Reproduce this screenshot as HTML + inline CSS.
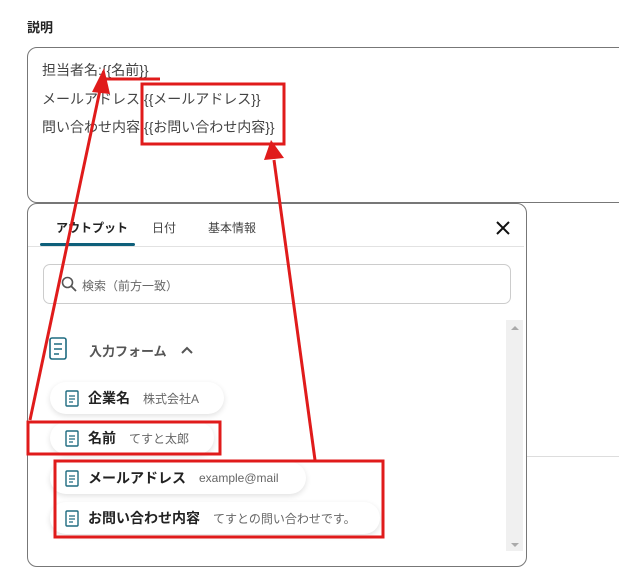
<!DOCTYPE html><html><head><meta charset="utf-8"><style>
body{margin:0;width:619px;height:569px;background:#fff;font-family:"Liberation Sans","Noto Sans CJK JP",sans-serif;position:relative;overflow:hidden}
.a{position:absolute}
.pill{position:absolute;height:32px;border-radius:16px;background:#fff;box-shadow:0 2px 6px rgba(0,0,0,.12);display:flex;align-items:center;white-space:nowrap}
.pill b{font-size:14px;color:#222;margin-left:9px}
.pill span{font-size:12px;color:#666;margin-left:13px}
.t{font-size:14px;color:#444;position:absolute;left:42px}
</style></head><body>
<div class="a" style="left:27px;top:17px;font-size:13px;font-weight:bold;color:#222">説明</div>
<div class="a" style="left:27px;top:47px;width:620px;height:154px;border:1px solid #777;border-radius:10px"></div>
<div class="t" style="top:60px">担当者名:{{名前}}</div>
<div class="t" style="top:89px">メールアドレス {{メールアドレス}}</div>
<div class="t" style="top:117px">問い合わせ内容 {{お問い合わせ内容}}</div>
<div class="a" style="left:526px;top:456px;width:93px;height:1px;background:#ddd"></div>
<div class="a" style="left:27px;top:203px;width:498px;height:362px;border:1px solid #777;border-radius:10px;background:#fff"></div>
<div class="a" style="left:56px;top:219px;font-size:12px;font-weight:bold;color:#222">アウトプット</div>
<div class="a" style="left:152px;top:219px;font-size:12px;color:#444">日付</div>
<div class="a" style="left:208px;top:219px;font-size:12px;color:#444">基本情報</div>
<div class="a" style="left:40px;top:243px;width:95px;height:3px;background:#0e5f7a;border-radius:2px"></div>
<div class="a" style="left:28px;top:246px;width:496px;height:1px;background:#e2e2e2"></div>
<svg class="a" style="left:494px;top:219px" width="18" height="18"><path d="M3 3L15 15M15 3L3 15" stroke="#111" stroke-width="2"/></svg>
<div class="a" style="left:43px;top:264px;width:466px;height:38px;border:1px solid #ccc;border-radius:7px"></div>
<svg class="a" style="left:61px;top:276px" width="16" height="16"><circle cx="6.5" cy="6.5" r="5" fill="none" stroke="#555" stroke-width="1.6"/><path d="M10 10L15 15" stroke="#555" stroke-width="1.8"/></svg>
<div class="a" style="left:82px;top:277px;font-size:12px;color:#666">検索（前方一致）</div>
<div class="a" style="left:506px;top:320px;width:17px;height:231px;background:#f0f0f0"></div>
<div class="a" style="left:511px;top:326px;border:4px solid transparent;border-bottom:4px solid #aaa;border-top:0"></div>
<div class="a" style="left:511px;top:543px;border:4px solid transparent;border-top:4px solid #aaa;border-bottom:0"></div>
<svg class="a" style="left:48px;top:334px" width="22" height="28"><rect x="2" y="4" width="16" height="21" rx="2" fill="none" stroke="#1e6b80" stroke-width="1.6"/><path d="M6 10h8M6 15h8M6 20h5" stroke="#1e6b80" stroke-width="1.6"/></svg>
<div class="a" style="left:89px;top:341px;font-size:13px;font-weight:bold;color:#555">入力フォーム</div>
<svg class="a" style="left:180px;top:345px" width="14" height="10"><path d="M2 8L7 3L12 8" fill="none" stroke="#555" stroke-width="2"/></svg>
<div class="pill" style="left:50px;top:382px;width:174px"><svg style="margin-left:15px" width="14" height="18"><rect x="1" y="2" width="12" height="15" rx="1" fill="none" stroke="#1e6b80" stroke-width="1.4"/><path d="M4 7h6M4 10h6M4 13h4" stroke="#1e6b80" stroke-width="1.3"/></svg><b>企業名</b><span>株式会社A</span></div>
<div class="pill" style="left:50px;top:422px;width:164px"><svg style="margin-left:15px" width="14" height="18"><rect x="1" y="2" width="12" height="15" rx="1" fill="none" stroke="#1e6b80" stroke-width="1.4"/><path d="M4 7h6M4 10h6M4 13h4" stroke="#1e6b80" stroke-width="1.3"/></svg><b>名前</b><span>てすと太郎</span></div>
<div class="pill" style="left:50px;top:462px;width:256px"><svg style="margin-left:15px" width="14" height="18"><rect x="1" y="2" width="12" height="15" rx="1" fill="none" stroke="#1e6b80" stroke-width="1.4"/><path d="M4 7h6M4 10h6M4 13h4" stroke="#1e6b80" stroke-width="1.3"/></svg><b>メールアドレス</b><span>example@mail</span></div>
<div class="pill" style="left:50px;top:502px;width:330px"><svg style="margin-left:15px" width="14" height="18"><rect x="1" y="2" width="12" height="15" rx="1" fill="none" stroke="#1e6b80" stroke-width="1.4"/><path d="M4 7h6M4 10h6M4 13h4" stroke="#1e6b80" stroke-width="1.3"/></svg><b>お問い合わせ内容</b><span>てすとの問い合わせです。</span></div>
<svg class="a" style="left:0;top:0" width="619" height="569">
<g fill="none" stroke="#e01b1b" stroke-width="3">
<rect x="142" y="84" width="142" height="60"/>
<rect x="28" y="422" width="192" height="32"/>
<rect x="55" y="461" width="328" height="76"/>
<path d="M103 79H160"/>
<path d="M30 420L100 90"/>
<path d="M315 460L274 160"/>
</g>
<polygon points="104,68 92,92 110,94" fill="#e01b1b"/>
<polygon points="271,140 264,160 284,158" fill="#e01b1b"/>
</svg>
</body></html>
